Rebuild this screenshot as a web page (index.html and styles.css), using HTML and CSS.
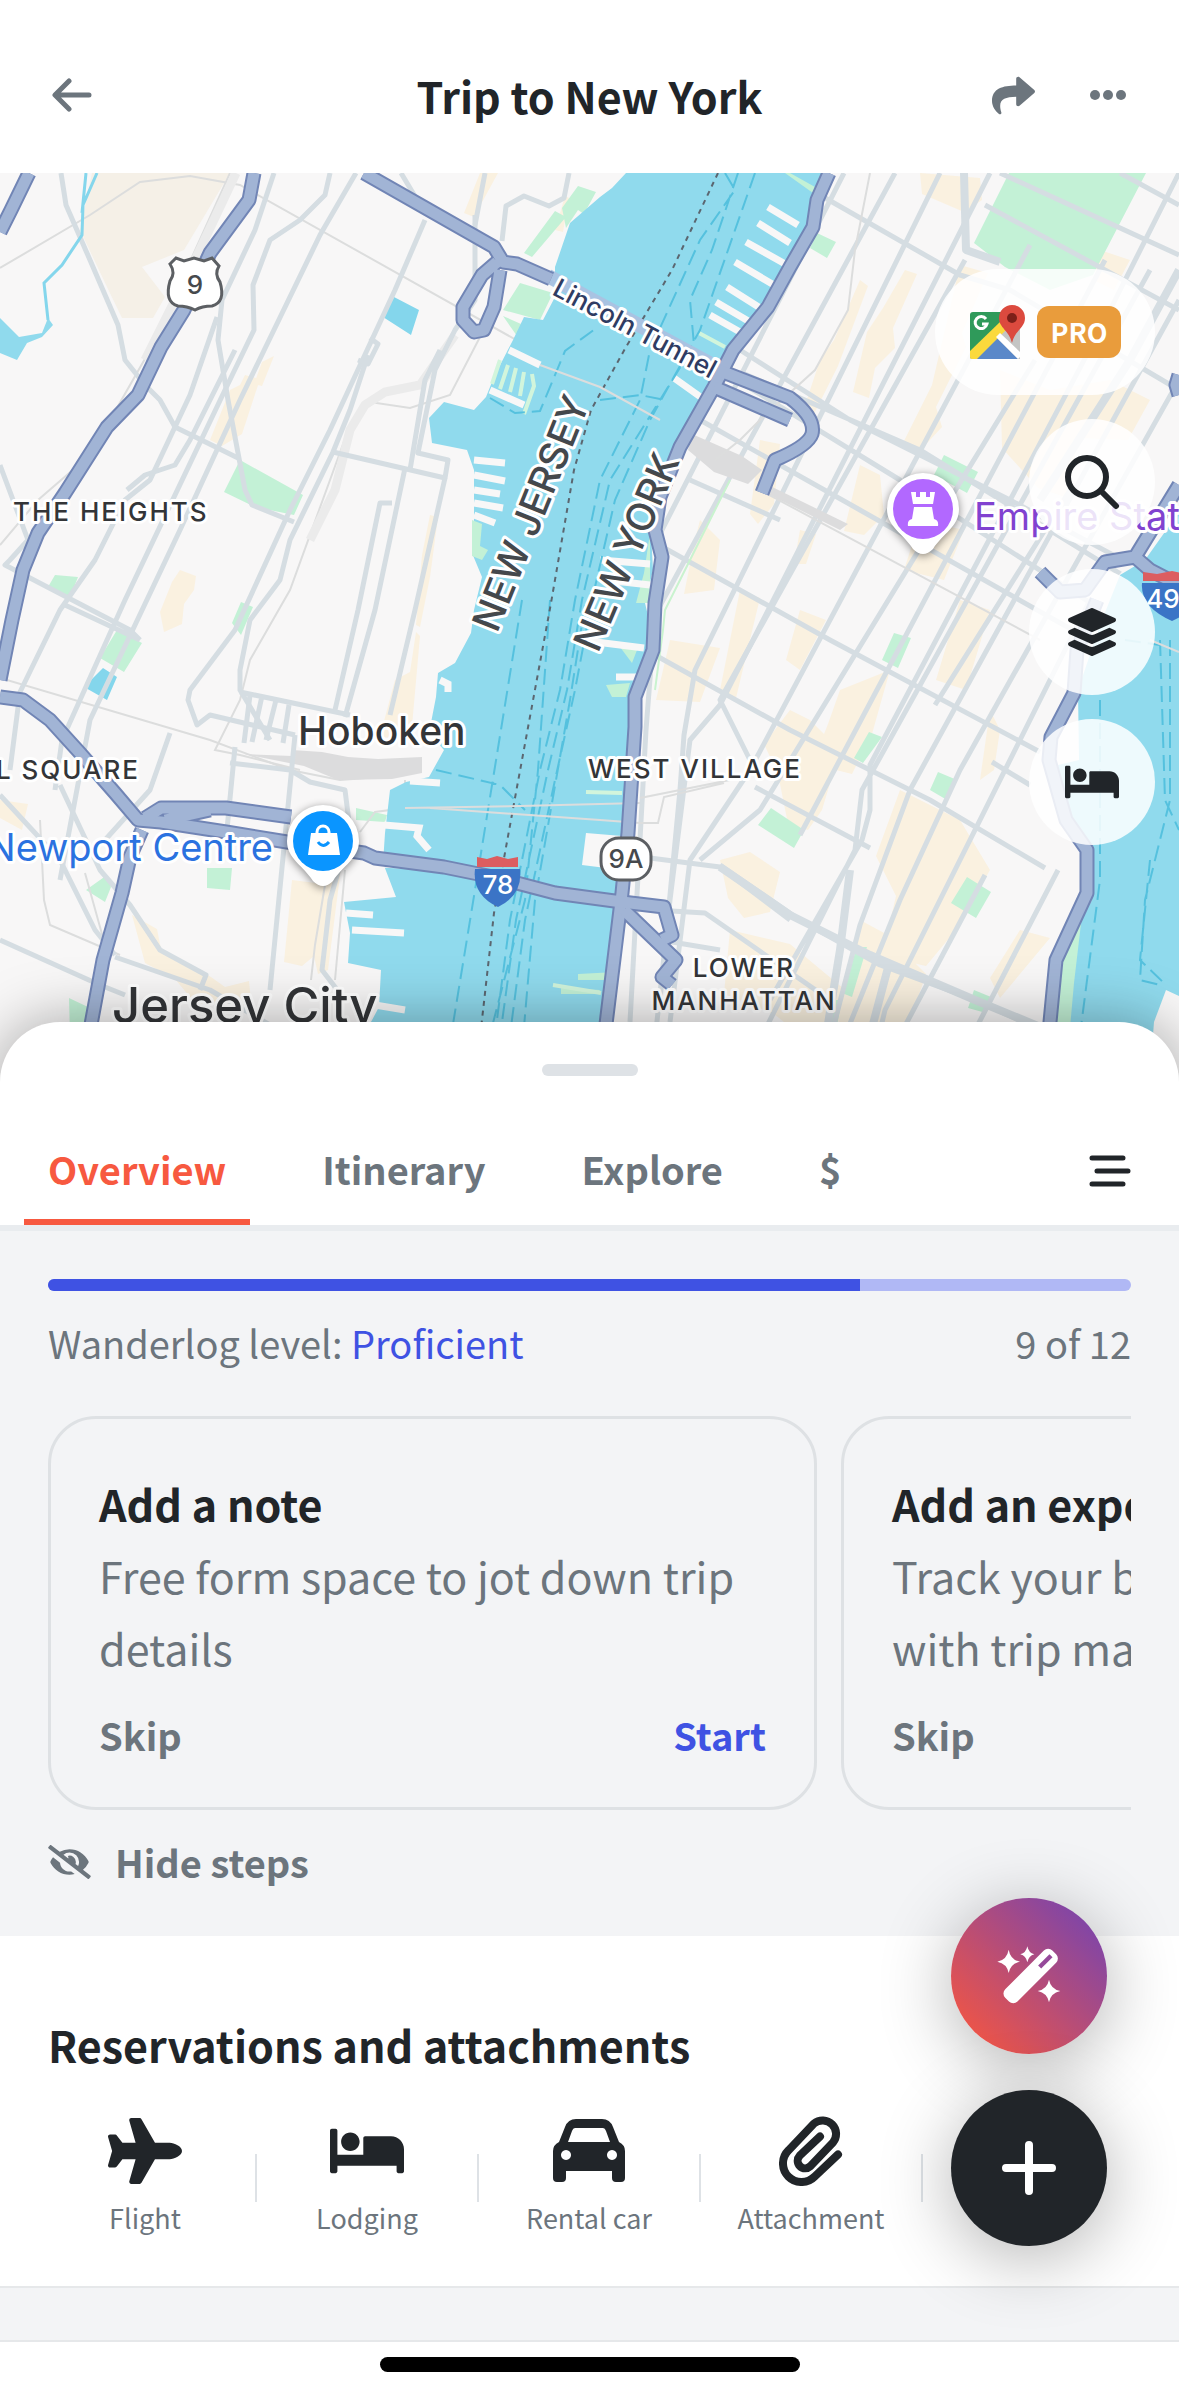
FILE: index.html
```
<!DOCTYPE html>
<html lang="en">
<head>
<meta charset="UTF-8">
<meta name="viewport" content="width=device-width, initial-scale=1">
<title>Trip to New York</title>
<link rel="stylesheet" href="styles.css">
</head>
<body>

<header class="topbar">
  <button class="icon-btn" aria-label="Back">
    <svg width="40" height="34" viewBox="0 0 40 34" fill="none" stroke="currentColor" stroke-width="5" stroke-linecap="round" stroke-linejoin="round"><path d="M37 17H4M17 3L3 17l14 14"/></svg>
  </button>
  <h1>Trip to New York</h1>
  <div class="topbar-actions">
    <button class="icon-btn" aria-label="Share">
      <svg width="43" height="43" viewBox="0 0 512 512" fill="currentColor"><path d="M503.691 189.836L327.687 37.851C312.281 24.546 288 35.347 288 56.015v80.053C127.371 137.907 0 170.1 0 322.326c0 61.441 39.581 122.309 83.333 154.132 13.653 9.931 33.111-2.533 28.077-18.631C66.066 312.814 132.917 274.316 288 272.085V360c0 20.7 24.3 31.453 39.687 18.164l176.004-152c11.071-9.562 11.086-26.753 0-36.328z"/></svg>
    </button>
    <button class="icon-btn" aria-label="More">
      <svg width="38" height="12" viewBox="0 0 38 12" fill="currentColor"><circle cx="6" cy="6" r="5"/><circle cx="19" cy="6" r="5"/><circle cx="32" cy="6" r="5"/></svg>
    </button>
  </div>
</header>

<main>
<section class="map" aria-label="Map">
  <svg class="map-canvas" viewBox="0 173 1179 900" preserveAspectRatio="xMidYMin slice">
    <defs>
      <clipPath id="manhattan"><path d="M829 173L817 200 813 227 790 267 768 307 733 350 714 387 680 447 660 497 655 530 662 557 655 603 653 650 635 697 635 727 628 833 622 893 613 967 605 1022 600 1073H1048L1056 960 1087 893V850L1066 820 1049 760 1051 737 1074 693 1077 650 1097 600 1135 557 1179 480V173Z"/></clipPath>
      <g id="highways">
        <path d="M29 173L11 210 0 232M254 173L249 200 210 253 184 310 161 347 138 395 107 427 65 493 38 533 23 570 12 620 0 680"/>
        <path d="M364 173L494 247 503 262 517 264 551 279M497 262L482 275 463 307V320L474 332 484 330 494 307 500 270"/>
        <path d="M829 173L817 200 813 227 790 267 768 307 733 350 714 387 680 447 660 497 655 530 662 557 655 603 653 650 635 697 635 727 628 833 622 893 613 967 600 1073"/>
        <path d="M718 370L790 398Q816 418 812 434 808 446 775 460L762 493M714 387L790 420"/>
        <path d="M0 697L23 700 50 720 80 753 115 793 138 820 161 822 226 832 287 842 364 853 375 858 444 867 498 878 555 893 622 902 664 907 672 935 662 940"/>
        <path d="M145 818L161 808 226 808 291 817M165 820L210 810M142 830L130 857 122 893 103 960 82 1073M624 910L676 960 662 977 672 985"/>
        <path d="M1179 485L1135 557 1105 562 1085 590 1060 592 1040 572M1097 600L1077 650 1074 693 1051 737 1049 760 1066 820 1087 850V893L1056 960 1050 1022 1048 1073M1135 557L1150 570 1179 585M1179 375l-3 10 3 10"/>
      </g>
    </defs>
    <rect class="land" y="173" width="1179" height="900"/>

    <!-- parks, industry, shopping -->
    <path class="industry" d="M92 173H230L184 250 142 267 165 297 153 318H122L107 287 80 230Z"/>
    <g class="block">
      <path d="M245 375l15 4-18 55-20 12-12-6 20-50 10-5zM262 362l12-6-12 30-8-2zM480 173l18 0-24 44-10-4zM180 570l16 6-2 14-10 14-2 20-18 8-4-20 12-30z"/>
      <path d="M430 515l8 2-8 60-10 50-4-2 6-70zM395 680l15-8 6-40 4 4-8 90-14 14-18-4zM292 880l32 4 12-28 6 4-14 110-10 4-4-18-12 10-18-4zM132 915l25 14 4 20 50 28 14 10 24-6 2 20-10 6-46-4-20-24-30-16zM0 800l28 4-6 26-22-12z"/>
      <path d="M560 260l14-30 4 3-15 40zM555 230l10-34 4 2-6 34z"/>
    </g>
    <path class="park" d="M578 186l18 6-12 22-6-4-12 18-4-20zM520 283l33 10-13 27-37-10zM503 316l18 8-4 12zM555 211l11 6-34 40-8-4zM240 460l63 35-9 20-39-8-31-15zM55 575l23 2-9 23-21-13zM117 630l25 13-18 29-24-14zM241 602l12 5-12 28-9-12zM207 868h25l-2 22-23-2zM107 875l4 12-6 15-19-12zM69 998l19 9-2 66H71zM356 808l31 7-2 7-29-2z"/>
    <path class="pond" d="M394 297l25 13-8 25-28-18zM103 668l14 9-10 23-23-13z"/>

    <!-- local streets, New Jersey -->
    <g class="rail">
      <path d="M0 268L90 215 140 182 190 176 240 185 600 387 680 430"/>
      <path d="M230 173L150 350 90 455 38 500 0 545M480 337L450 395 410 408 370 402 350 425 330 480 290 590 250 660 240 700 215 750 240 755 300 770"/>
      <path d="M0 678L210 740 290 770 340 780 405 775M40 820L44 900 50 925 120 955M325 885l-10 60-4 35M345 870l-10 110M405 780v28l-30 4-15 20M405 808H600"/>
      <path d="M425 810L480 815 600 820M85 873L105 945"/>
    </g>
    <path class="yard" d="M292 750l30 2 26 5 30 2 44-2v16l-30 6-54 1-34-14-60-12 48 2z"/>
    <path class="rail wide" d="M455 335L420 385 385 392 365 405 350 430 335 490 310 540M236 173L195 260 145 360"/>
    <g class="street">
      <path d="M61 173L66 205 90 260 118 325 125 360 145 385 160 400 175 427 238 458"/>
      <path d="M274 173L255 230 222 300 218 340 228 400 245 490 252 505 294 522"/>
      <path d="M356 173L320 235 240 400 180 530 90 720 60 880"/>
      <path d="M330 173L325 195 300 220 270 240 253 285 254 330 225 390 125 600 62 740 55 790"/>
      <path d="M425 220L395 290 330 430 290 510 235 630 190 690 188 700 197 725 210 715 295 735"/>
      <path d="M217 317L190 395 150 480 125 500 95 560 60 610 20 692 10 770"/>
      <path d="M127 490L145 475 175 465 190 440 235 350"/>
      <path d="M485 173L475 225M401 173l18 30M569 173l-5 25-15 8-25-10-18 10-4 35"/>
      <path d="M370 338l8 6-10 20-10-4M368 355L350 410 333 452 290 540 280 580 250 620 240 670 240 690 270 740"/>
      <path d="M333 452L445 478 448 460 418 453 435 370 455 330 475 300 475 215M410 470L425 380 440 350"/>
      <path d="M445 478L415 610 390 715M405 468L375 610 345 717M392 503h-12L358 610 335 710"/>
      <path d="M240 692L350 715M250 695l-6 48M262 696l-10 46M276 700l-10 40M289 705l-6 38"/>
      <path d="M0 465L28 540 10 560 5 565 130 630 140 640M65 605L140 640"/>
      <path d="M235 747L225 850M295 735L270 990M230 763L290 770 310 782 345 790 350 830 330 900 322 970 345 1000"/>
      <path d="M170 733L150 790 105 840M60 785L100 870 130 905 160 950 206 975 200 990"/>
      <path d="M0 940L100 985 125 995M115 957L210 990 330 1060M0 795L60 860 95 930 115 955"/>
    </g>

    <!-- Manhattan grid -->
    <g clip-path="url(#manhattan)">
      <g class="block">
        <path d="M920 173l60 5 2 22-18 12-42-18zM860 280l8 6-30 80-30 60-8-6 20-60 14-20zM905 270l12 4-24 54 2 20-20 20-6 30-16-6 14-60 16-24zM960 265l28 8-26 60 4 14-30 60 6 20-26 28-14-10 30-60zM1000 370l50 20 60-10 40 20-22 40-50-2-10 60-30-10-36-40z"/>
        <path d="M760 440l20 4-6 60-16 20-8-10zM860 465l20 10 4 40-20 20-20-4zM800 530l16 4-10 30-12 0zM920 520l44 10-20 50-40-10zM700 520l20 20-6 50-30 4 10-50zM670 640l50 8-20 54-44-2zM740 590l20 8-24 100-16-8zM840 690l50-20-18 64-20 40-40-10 16-40zM960 600l30 10-24 80-30-10zM800 610l26 10-26 50-14-10z"/>
        <path d="M790 710l20 10 30 30-18 60-14 20-20-6-10-50-14-30zM720 860l30-8 30 20-10 40-26 6-16-20zM900 790l60 30 30 50-34 60-30 36-44-10 14-60-20-40zM730 930l60 14 60 50-26 60-50-40-50-20zM860 920l26 14 40 40-34 100h-60l10-80zM990 710l10 20-6 40-14 10zM1020 930l30 8-50 60-10-20zM1100 250l30 10-16 30-20-10z"/>
      </g>
      <path class="park" d="M1009 173H1146L1093 275 1050 290 1005 267 974 243ZM817 233l19 9-9 16-17-10zM944 455l34 17-11 21-33-18zM894 633l17 5-13 30-16-8zM869 732l13 5-19 26-9-5zM938 772l19 8-10 20-17-10zM771 808l33 22-10 18-36-23zM967 877l24 15-15 26-25-15zM857 947h10l-15 50-10-4zM974 990l17 7-5 16-18-5zM842 1000l-6 30h-10l4-30z"/>
      <g class="street">
        <path d="M844 173L560 730M895 173L655 615 646 730 630 1022M940 173L695 670 684 735 680 790 660 1000M990 173L720 705 690 740 670 900 655 1040"/>
        <path d="M1035 360L760 810 700 860M1030 245L750 770 690 860 670 1022M965 260L720 700 750 760"/>
        <path d="M1105 260L800 835M1150 270L862 790 855 850 750 1060M1179 173L1100 330 870 765 870 810 862 840 770 1000M1179 300L910 790 860 925 830 1040M1179 380L960 770 900 900 830 1073M1090 600L940 900 885 1010 870 1073M1058 870L970 1040M985 875L880 1073M1070 490L935 705"/>
        <path d="M820 195L960 275 1010 290 1179 390M740 372L920 450 1179 610M745 385L900 480 1179 660M700 420L860 510 1179 690M740 350L850 420 1010 500 1179 590"/>
        <path d="M650 540L830 640 1040 752M655 655L790 730 930 800 1045 868M755 787L870 848M720 865L800 920 880 965 975 1000 1073 1045M650 858L720 867 790 920M655 910L705 913 830 1000M660 940L720 950"/>
        <path d="M985 205L1179 310M1000 173L1179 255M1120 173L1179 205M690 480L780 520M992 762L1030 785"/>
        <path class="wide" d="M964 173L966 250 1000 262M720 867L790 915 870 955 975 1000 1060 1035M1179 270L1130 360 1040 500M850 870L840 950 820 1073M890 960L860 1073"/>
      </g>
      <path class="yard" d="M692 434l50 22 20 14-14 14-34-12-26-22zM762 482l86 42-8 6-80-40z"/>
      <path class="rail" d="M870 173L855 250 848 310 815 370 760 420 740 440 715 460M760 490L1040 640M640 798L730 780M638 823h20l6-26 60-14"/>
      <path class="lawn" d="M655 690l8-60 2-20 20-40 25-50 20-40"/>
    </g>

    <!-- rivers -->
    <path class="water" d="M626 173H823L817 190 806 230 768 303 725 357 702 400 672 457 660 503 651 533 653 570 645 603 649 620 645 667 630 693 628 717 630 783 622 833 618 900 612 960 603 1022 598 1073H371L371 1022 379 1007 381 970 348 963 350 933 344 902 396 897 383 863 385 833 390 790 406 782 429 777 444 750 429 733 436 697 438 673 455 663 471 633 474 610 482 577 472 553 474 520V470L467 450 432 443 429 418 444 402 474 410 486 397 494 377 513 340 524 317 543 320 555 297V267L570 223 585 210 600 197 612 188Z"/>
    <path class="water" d="M1179 512L1145 560 1120 575 1100 625 1078 690 1079 760 1058 765 1066 817 1092 847V900L1060 960 1054 1073H1150L1154 1022 1166 990 1179 996Z"/>
    <path class="water" d="M0 318L19 337 42 333 48 318 53 325 42 337 27 343 17 360 0 353Z"/>
    <path class="creek" d="M97 173L83 205 82 235 62 265 44 283 48 320M86 173l-4 40"/>
    <path class="park" d="M1082 915L1074 983 1066 1073H1050L1057 960ZM620 647l17 3-5 13zM606 685l24-2-4 14-14 0zM616 972l-38 2v6h36zM600 990l-39-2v6h36zM472 520l10 4-2 22 8 4-6 10-10-4zM650 533l-6 40-8 30h14zM790 173l25 14-2 6-28-20z"/>
    <g class="pier">
      <path d="M768 207l30 18M758 223l32 20M746 242l41 23M735 262l44 26M727 287l38 24M716 302l34 20M710 315l30 17M674 378l28 20"/>
      <path d="M474 460l31 3M474 475l31 6M474 490l26 4M474 503l29 5M474 515l21 8"/>
      <path d="M509 350l31 15M490 390l34 15M346 913l27 2M352 930l52 3M375 1005l30 5M580 640l64 8M616 677h24M600 560l50 4M605 580l45 5"/>
      <path d="M384 825l35 3-2 8 12 14M440 680l8 4v8M380 864l40 2M410 781l30 2"/>
    </g>
    <path class="land" d="M586 833l36 3v34l-40-5z"/>
    <path class="jetty" d="M500 360l-8 24M508 365l-8 24M516 368l-6 24M524 372l-4 24M532 374l2 12-10 28M699 333l26 14M586 792l36 1M553 985l48 8"/>

    <!-- ferry lanes and state line -->
    <path class="ferry" d="M725 173L735 190 700 240 650 350 640 400 600 480 575 600 560 690 540 770 510 920 490 1073M738 173L712 250 690 300 694 345 660 400 610 480 582 600 567 690 548 770 516 920 495 1073M755 173L700 330 650 420 615 500 592 600 575 690 555 780 525 920 505 1073M600 400L640 395 665 400M522 600L475 890 445 1073M550 600L538 770 525 900 480 1073M436 770L500 785 525 810M585 605L570 700 535 900 520 1073M490 398l25 15 25-2 25-60 30-22"/>
    <path class="ferry" d="M1160 640L1165 800 1179 830M1170 640L1170 800 1145 900 1140 980 1160 985M1100 700V880L1075 1073M1125 640L1160 645M1150 860L1140 960 1166 985"/>
    <path class="state-line" d="M718 173L672 270 626 347 591 410 574 470 551 603 517 787 494 913 476 1073"/>
    <path class="rail" d="M405 808L520 806 640 803M430 808L600 820 640 823M540 365L600 387 660 420M1150 640L1179 652"/>

    <!-- highways: dark casing first, lighter fill over it -->
    <path class="tunnel" d="M548 276L722 370"/>
    <use class="hw-case" href="#highways"/>
    <use class="hw-fill" href="#highways"/>

    <!-- place names -->
    <g class="label">
      <text class="road" transform="translate(551 294) rotate(28)">Lincoln Tunnel</text>
      <text class="state" transform="translate(497 634) rotate(-68)">NEW JERSEY</text>
      <text class="state" transform="translate(598 654) rotate(-67)">NEW YORK</text>
      <text class="area" x="13" y="521">THE HEIGHTS</text>
      <text class="area" x="140" y="779" text-anchor="end">L SQUARE</text>
      <text class="area" x="588" y="778">WEST VILLAGE</text>
      <text class="area" x="744" y="977" text-anchor="middle">LOWER</text>
      <text class="area" x="744" y="1010" text-anchor="middle">MANHATTAN</text>
      <text class="town" x="298" y="745">Hoboken</text>
      <text class="city" x="112" y="1023">Jersey City</text>
      <text class="poi shop" x="273" y="861" text-anchor="end">Newport Centre</text>
      <text class="poi sight" x="974" y="530">Empire State</text>
    </g>

    <!-- route shields -->
    <path class="shield" d="M170 264l6-6 8 3 10-3 10 3 8-3 7 8q-5 8 1 16 6 20-8 24-10 0-17 4-8-4-17-4-14-4-8-25 6-8 0-17z"/>
    <text class="shield-no" x="195" y="294">9</text>
    <rect class="shield" x="601" y="838" width="50" height="42" rx="18"/>
    <text class="shield-no" x="626" y="868">9A</text>
    <path class="interstate" d="M475 869h45q3 26-22 38-26-12-23-38z"/>
    <path class="interstate-top" d="M477 867v-10l10 2 10-3 11 3 10-2v10z"/>
    <text class="interstate-no" x="498" y="894">78</text>
    <path class="interstate" d="M1142 583h60q2 24-30 38-32-14-30-38z"/>
    <path class="interstate-top" d="M1143 581v-9l14 2 15-3 15 3 14-2v9z"/>
    <text class="interstate-no" x="1171" y="608">495</text>

    <!-- pins -->
    <g class="pin">
      <path class="pin-body" d="M923 473a36 36 0 0 1 36 36c0 18-16 24-26 40q-10 10-20 0c-10-16-26-22-26-40a36 36 0 0 1 36-36z"/>
      <circle cx="923" cy="509" r="30" fill="#b268ff"/>
      <path fill="#fff" d="M911 492h5v5h4v-5h6v5h4v-5h5l-2 12h-20zM914 507h18l2 12q5 1 4 7h-30q-1-6 4-7z"/>
    </g>
    <g class="pin">
      <path class="pin-body" d="M323 805a36 36 0 0 1 36 36c0 18-16 24-26 40q-10 10-20 0c-10-16-26-22-26-40a36 36 0 0 1 36-36z"/>
      <circle cx="323" cy="841" r="30" fill="#0a95ff"/>
      <path fill="#fff" d="M311 833h26l3 22h-32z"/>
      <path fill="none" stroke="#fff" stroke-width="3" d="M317 836v-4a6 6 0 0 1 12 0v4"/>
      <path fill="none" stroke="#0a95ff" stroke-width="3" d="M318 842q5 7 11 0"/>
    </g>
  </svg>

  <div class="map-controls">
    <button class="map-btn map-btn-pro" aria-label="Open in Google Maps">
      <svg width="56" height="56" viewBox="0 0 56 56">
        <rect x="1" y="8" width="50" height="47" rx="3" fill="#2f9a5a"/>
        <path d="M1 55L51 8v47z" fill="#c4c5c4"/>
        <path d="M3 55L27 33l22 22z" fill="#5a88c9"/>
        <path d="M1 47L31 18l7 7L8 55H3q-2 0-2-2z" fill="#fbd93c"/>
        <path d="M27 33l4-4 20 19v5l-2 2z" fill="#fff"/>
        <path d="M43 1a13 13 0 0 1 13 13c0 10-10 12-13 25-3-13-13-15-13-25A13 13 0 0 1 43 1z" fill="#dc4a3e"/>
        <circle cx="43" cy="14" r="5" fill="#7c2019"/>
        <path d="M17 15a6 6 0 1 0 1 5h-5" fill="none" stroke="#fff" stroke-width="3"/>
      </svg>
      <span class="pro">PRO</span>
    </button>
    <button class="map-btn" aria-label="Search">
      <svg width="56" height="56" viewBox="0 0 56 56" fill="none" stroke="currentColor" stroke-width="6" stroke-linecap="round"><circle cx="23" cy="23" r="19"/><path d="M37 37l15 15"/></svg>
    </button>
    <button class="map-btn" aria-label="Map layers">
      <svg width="48" height="48" viewBox="0 0 512 512" fill="currentColor"><path d="M12.41 148.02l232.94 105.67c6.8 3.09 14.49 3.09 21.29 0l232.94-105.67c16.55-7.51 16.55-32.52 0-40.03L266.65 2.31a25.607 25.607 0 0 0-21.29 0L12.41 107.98c-16.55 7.51-16.55 32.53 0 40.04zm487.18 88.28l-58.09-26.33-161.64 73.27c-7.56 3.43-15.59 5.17-23.86 5.17s-16.29-1.74-23.86-5.17L70.51 209.97l-58.1 26.33c-16.55 7.5-16.55 32.5 0 40l232.94 105.59c6.8 3.08 14.49 3.08 21.29 0L499.59 276.3c16.55-7.5 16.55-32.5 0-40zm0 127.8l-57.87-26.23-161.86 73.37c-7.56 3.43-15.59 5.17-23.86 5.17s-16.29-1.74-23.86-5.17L70.29 337.87 12.41 364.1c-16.55 7.5-16.55 32.5 0 40l232.94 105.59c6.8 3.08 14.49 3.08 21.29 0L499.59 404.1c16.55-7.5 16.55-32.5 0-40z"/></svg>
    </button>
    <button class="map-btn" aria-label="Hotels">
      <svg width="54" height="44" viewBox="0 0 640 512" fill="currentColor"><path d="M176 256c44.11 0 80-35.89 80-80s-35.89-80-80-80-80 35.89-80 80 35.89 80 80 80zm352-128H304c-8.84 0-16 7.16-16 16v144H64V80c0-8.84-7.16-16-16-16H16C7.16 64 0 71.16 0 80v352c0 8.84 7.16 16 16 16h32c8.84 0 16-7.16 16-16v-48h512v48c0 8.84 7.16 16 16 16h32c8.84 0 16-7.16 16-16V240c0-61.86-50.14-112-112-112z"/></svg>
    </button>
  </div>
</section>

<div class="sheet">
  <div class="handle"></div>
  <nav class="tabs">
    <a class="tab active" href="#overview">Overview</a>
    <a class="tab" href="#itinerary">Itinerary</a>
    <a class="tab" href="#explore">Explore</a>
    <a class="tab" href="#budget">$</a>
    <button class="icon-btn tabs-menu" aria-label="Sections">
      <svg width="42" height="34" viewBox="0 0 42 34" fill="none" stroke="currentColor" stroke-width="5" stroke-linecap="round"><path d="M3 4h31M8 17h31M3 30h31"/></svg>
    </button>
  </nav>

  <section class="steps" id="overview">
    <div class="progress"><div class="progress-fill" style="width: 75%"></div></div>
    <div class="level">
      <span>Wanderlog level: <a href="#level">Proficient</a></span>
      <span>9 of 12</span>
    </div>
    <div class="cards">
      <article class="card">
        <h3>Add a note</h3>
        <p>Free form space to jot down trip details</p>
        <div class="card-actions">
          <button class="skip">Skip</button>
          <button class="start">Start</button>
        </div>
      </article>
      <article class="card">
        <h3>Add an expense</h3>
        <p>Track your budget<br>with trip mates</p>
        <div class="card-actions">
          <button class="skip">Skip</button>
        </div>
      </article>
    </div>
    <button class="hide-steps">
      <svg width="43" height="34" viewBox="0 0 640 512" fill="currentColor"><path d="M320 400c-75.85 0-137.25-58.71-142.9-133.11L72.2 185.82c-13.79 17.3-26.48 35.59-36.72 55.59a32.35 32.35 0 0 0 0 29.19C89.71 376.41 197.07 448 320 448c26.91 0 52.87-4 77.89-10.46L346 397.39a144.13 144.13 0 0 1-26 2.61zm313.82 58.1l-110.55-85.44a331.25 331.25 0 0 0 81.25-102.07 32.35 32.35 0 0 0 0-29.19C550.29 135.59 442.93 64 320 64a308.15 308.15 0 0 0-147.32 37.7L45.46 3.37A16 16 0 0 0 23 6.18L3.37 31.45A16 16 0 0 0 6.18 53.9l588.36 454.73a16 16 0 0 0 22.46-2.81l19.64-25.27a16 16 0 0 0-2.82-22.45zm-183.72-142l-39.3-30.38A94.75 94.75 0 0 0 416 256a94.76 94.76 0 0 0-121.31-92.21A47.65 47.65 0 0 1 304 192a46.64 46.64 0 0 1-1.54 10l-73.61-56.89A142.31 142.31 0 0 1 320 112a143.92 143.92 0 0 1 144 144c0 21.63-5.29 41.79-13.9 60.11z"/></svg>
      Hide steps
    </button>
  </section>

  <section class="reservations">
    <h2>Reservations and attachments</h2>
    <div class="types">
      <button class="type">
        <svg width="74" height="66" viewBox="0 0 576 512" fill="currentColor"><path d="M480 192H365.71L260.61 8.06A16.014 16.014 0 0 0 246.71 0h-65.5c-10.63 0-18.3 10.17-15.38 20.39L214.86 192H112l-43.2-57.6c-3.02-4.03-7.77-6.4-12.8-6.4H16.01C5.6 128-2.04 137.78.49 147.88L32 256 .49 364.12C-2.04 374.22 5.6 384 16.01 384H56c5.04 0 9.78-2.37 12.8-6.4L112 320h102.86l-49.03 171.6c-2.92 10.22 4.75 20.4 15.38 20.4h65.5c5.74 0 11.04-3.08 13.89-8.06L365.71 320H480c35.35 0 96-28.65 96-64s-60.65-64-96-64z"/></svg>
        <span>Flight</span>
      </button>
      <i class="divider"></i>
      <button class="type">
        <svg width="74" height="66" viewBox="0 0 640 512" fill="currentColor"><path d="M176 256c44.11 0 80-35.89 80-80s-35.89-80-80-80-80 35.89-80 80 35.89 80 80 80zm352-128H304c-8.84 0-16 7.16-16 16v144H64V80c0-8.84-7.16-16-16-16H16C7.16 64 0 71.16 0 80v352c0 8.84 7.16 16 16 16h32c8.84 0 16-7.16 16-16v-48h512v48c0 8.84 7.16 16 16 16h32c8.84 0 16-7.16 16-16V240c0-61.86-50.14-112-112-112z"/></svg>
        <span>Lodging</span>
      </button>
      <i class="divider"></i>
      <button class="type">
        <svg width="72" height="66" viewBox="0 -1 72 66" fill="currentColor"><path fill-rule="evenodd" d="M23 0h26q8 0 11 8l6 15q6 3 6 9v27q0 4-4 4h-5q-4 0-4-4v-7H13v7q0 4-4 4H4q-4 0-4-4V32q0-6 6-9l6-15q3-8 11-8zm-1 9q-2 0-3 3l-4 11h42l-4-11q-1-3-3-3zM13 31a5 5 0 1 0 .01 0zM59 31a5 5 0 1 0 .01 0z"/></svg>
        <span>Rental car</span>
      </button>
      <i class="divider"></i>
      <button class="type">
        <svg width="64" height="70" viewBox="0 0 64 70" fill="none" stroke="currentColor" stroke-width="8" stroke-linecap="round" stroke-linejoin="round"><path d="M59 38.500L35.600 60.600A18.500 18.500 0 0 1 9.400 34.400L35 7.500A13.500 13.500 0 0 1 54 26.500L31.300 50.300A7.500 7.500 0 0 1 20.700 39.700L41 20.500"/></svg>
        <span>Attachment</span>
      </button>
      <i class="divider"></i>
    </div>
  </section>
  <div class="section-gap"></div>
</div>
</main>

<footer class="home-bar"><div class="home-indicator"></div></footer>

<div class="fabs">
  <button class="fab fab-magic" aria-label="Trip assistant">
    <svg width="64" height="60" viewBox="137 167 190 180" fill="#fff">
      <rect x="137" y="231" width="200" height="52" rx="18" transform="rotate(-45 237 257)"/>
      <path d="M264 230l34-34" stroke="#96499a" stroke-width="13"/>
      <path d="M171 178q5 30 34 36-29 6-34 34-5-28-34-34 29-6 34-36zM227 168q4 20 21 24-17 4-21 24-4-20-21-24 17-4 21-24zM292 268q5 28 34 34-29 6-34 34-5-28-34-34 29-6 34-34z"/>
    </svg>
  </button>
  <button class="fab fab-add" aria-label="Add">
    <svg width="56" height="56" viewBox="0 0 56 56" stroke="#fff" stroke-width="8" stroke-linecap="round"><path d="M28 5v46M5 28h46"/></svg>
  </button>
</div>

</body>
</html>
```
FILE: styles.css
```
* { box-sizing: border-box; }
body { position: relative; margin: 0; background: #fff; color: #212529; font-family: "Noto Sans CJK SC", "Noto Sans", sans-serif; font-size: 38px; line-height: 48px; overflow-x: hidden; }
h1, h2, h3, p { margin: 0; font-size: 43px; line-height: 72px; }
h1, h2, h3 { font-weight: bold; }
p { font-weight: normal; }
a { color: inherit; text-decoration: none; }
button { display: block; margin: 0; padding: 0; border: none; background: none; color: inherit; font: inherit; cursor: pointer; }
svg { display: block; }

.topbar { display: grid; grid-template-columns: 1fr auto 1fr; align-items: center; padding: 59px 52px 42px; }
.topbar .icon-btn { color: #6c757d; }
.topbar-actions { display: flex; align-items: center; justify-content: flex-end; gap: 54px; }

/* map */
.map { position: relative; height: 900px; overflow: hidden; }
.map-canvas { width: 100%; height: 100%; }
.land { fill: #f8f7f7; }
.water { fill: #90daed; }
.pond { fill: #84d6ec; }
.park { fill: #c3f1d6; }
.block { fill: #faf1e0; }
.industry { fill: #f5f0e7; }
.yard { fill: #dcdcdd; }
.creek { fill: none; stroke: #84d6ec; stroke-width: 3; }
.street { fill: none; stroke: #d5dde2; stroke-width: 5; stroke-linejoin: round; }
.street .wide { stroke-width: 8; }
.rail { fill: none; stroke: #dcdddd; stroke-width: 2; }
.rail.wide { stroke: #ebebeb; stroke-width: 9; }
.lawn { fill: none; stroke: #c9f3cf; stroke-width: 2; }
.pier { fill: none; stroke: #f8f7f7; stroke-width: 7; }
.jetty { fill: none; stroke: #d2f5dc; stroke-width: 4; }
.ferry { fill: none; stroke: #55c1de; stroke-width: 2; stroke-dasharray: 16 7; }
.state-line { fill: none; stroke: #5b6670; stroke-width: 2; stroke-dasharray: 5 5; }
.hw-case, .hw-fill { fill: none; stroke-linejoin: round; }
.hw-case { stroke: #7185b5; stroke-width: 15; }
.hw-fill { stroke: #a1b4d5; stroke-width: 11; }
.tunnel { stroke: #a9c3e2; stroke-width: 14; }

.label text { font-family: Inter, "Liberation Sans", sans-serif; font-weight: 500; fill: #333538; stroke: #fff; stroke-width: 6; stroke-linejoin: round; paint-order: stroke; }
.label .road { font-size: 26px; fill: #2f3c63; }
.label .state { font-size: 39px; fill: #44484c; }
.label .area { font-size: 26px; letter-spacing: 2px; }
.label .town { font-size: 39px; }
.label .city { font-size: 49px; }
.label .poi { font-size: 38px; font-weight: 400; }
.label .shop { fill: #2b72e0; }
.label .sight { fill: #8142d0; }
.shield { fill: #fff; stroke: #5c5f63; stroke-width: 3; }
.shield-no, .interstate-no { font-family: Inter, "Liberation Sans", sans-serif; font-size: 26px; font-weight: 500; text-anchor: middle; fill: #46494d; }
.interstate { fill: #3b74c6; }
.interstate-top { fill: #dc5d60; }
.interstate-no { fill: #fff; }
.pin { filter: drop-shadow(0 2px 4px rgba(0,0,0,.45)); }
.pin-body { fill: #fff; }

.map-controls { position: absolute; top: 96px; right: 24px; display: flex; flex-direction: column; align-items: flex-end; gap: 24px; }
.map-btn { display: flex; align-items: center; justify-content: center; gap: 12px; width: 126px; height: 126px; border-radius: 63px; background: rgba(255,255,255,.85); }
.map-btn-pro { width: 220px; }
.pro { padding: 2px 13px; border-radius: 12px; background: #e99c3c; color: #fff; font-size: 27px; font-weight: bold; }

/* bottom sheet */
.sheet { position: relative; margin-top: -51px; padding-top: 42px; border-radius: 60px 60px 0 0; background: #fff; box-shadow: 0 0 60px rgba(0,0,0,.35); }
.handle { width: 96px; height: 12px; margin: 0 auto; border-radius: 6px; background: #dee2e6; }
.tabs { display: flex; align-items: center; gap: 48px; padding: 40px 48px 0 24px; border-bottom: 6px solid #e9ecef; }
.tab { padding: 29px 24px 26px; border-bottom: 6px solid transparent; color: #6c757d; font-weight: bold; }
.tab.active { border-color: #f75940; color: #f75940; }
.tabs-menu { margin-left: auto; }

.steps { padding: 48px 48px 50px; background: #f3f4f6; color: #6c757d; }
.progress { height: 12px; border-radius: 6px; background: #b0b8f5; overflow: hidden; }
.progress-fill { height: 100%; background: #3f52e3; }
.level { display: flex; justify-content: space-between; margin: 28px 0 49px; }
.level a, .start { color: #3f52e3; }
.cards { display: flex; gap: 24px; overflow: hidden; }
.card { flex: 0 0 71%; padding: 48px; border: 3px solid #dee1e4; border-radius: 48px; }
.card h3 { color: #212529; }
.card-actions { display: flex; justify-content: space-between; margin-top: 28px; font-weight: bold; }
.hide-steps { display: flex; align-items: center; gap: 24px; margin-top: 28px; font-weight: bold; }

.reservations { padding: 72px 48px 46px; border-bottom: 2px solid #e6e8ea; }
.types { display: flex; align-items: center; gap: 13px; margin-top: 36px; overflow: hidden; }
.type { display: flex; flex: 0 0 194px; flex-direction: column; align-items: center; gap: 10px; color: #212529; font-size: 27px; line-height: 44px; }
.type svg { height: 70px; }
.type span { color: #6c757d; }
.divider { flex: none; width: 2px; height: 48px; background: #dee2e6; }
.section-gap { height: 54px; border-bottom: 2px solid #e6e8ea; background: #f3f4f6; }

.home-bar { position: relative; padding: 15px 0 24px; background: #fff; }
.home-indicator { width: 420px; height: 15px; margin: 0 auto; border-radius: 8px; background: #000; }

.fabs { position: absolute; right: 72px; bottom: 150px; display: flex; flex-direction: column; gap: 36px; }
.fab { display: flex; align-items: center; justify-content: center; width: 156px; height: 156px; border-radius: 50%; box-shadow: 0 12px 72px rgba(0,0,0,.3); }
.fab-magic { background: linear-gradient(45deg, #f05545 10%, #7f45a8 88%); }
.fab-add { background: #212529; }
```
